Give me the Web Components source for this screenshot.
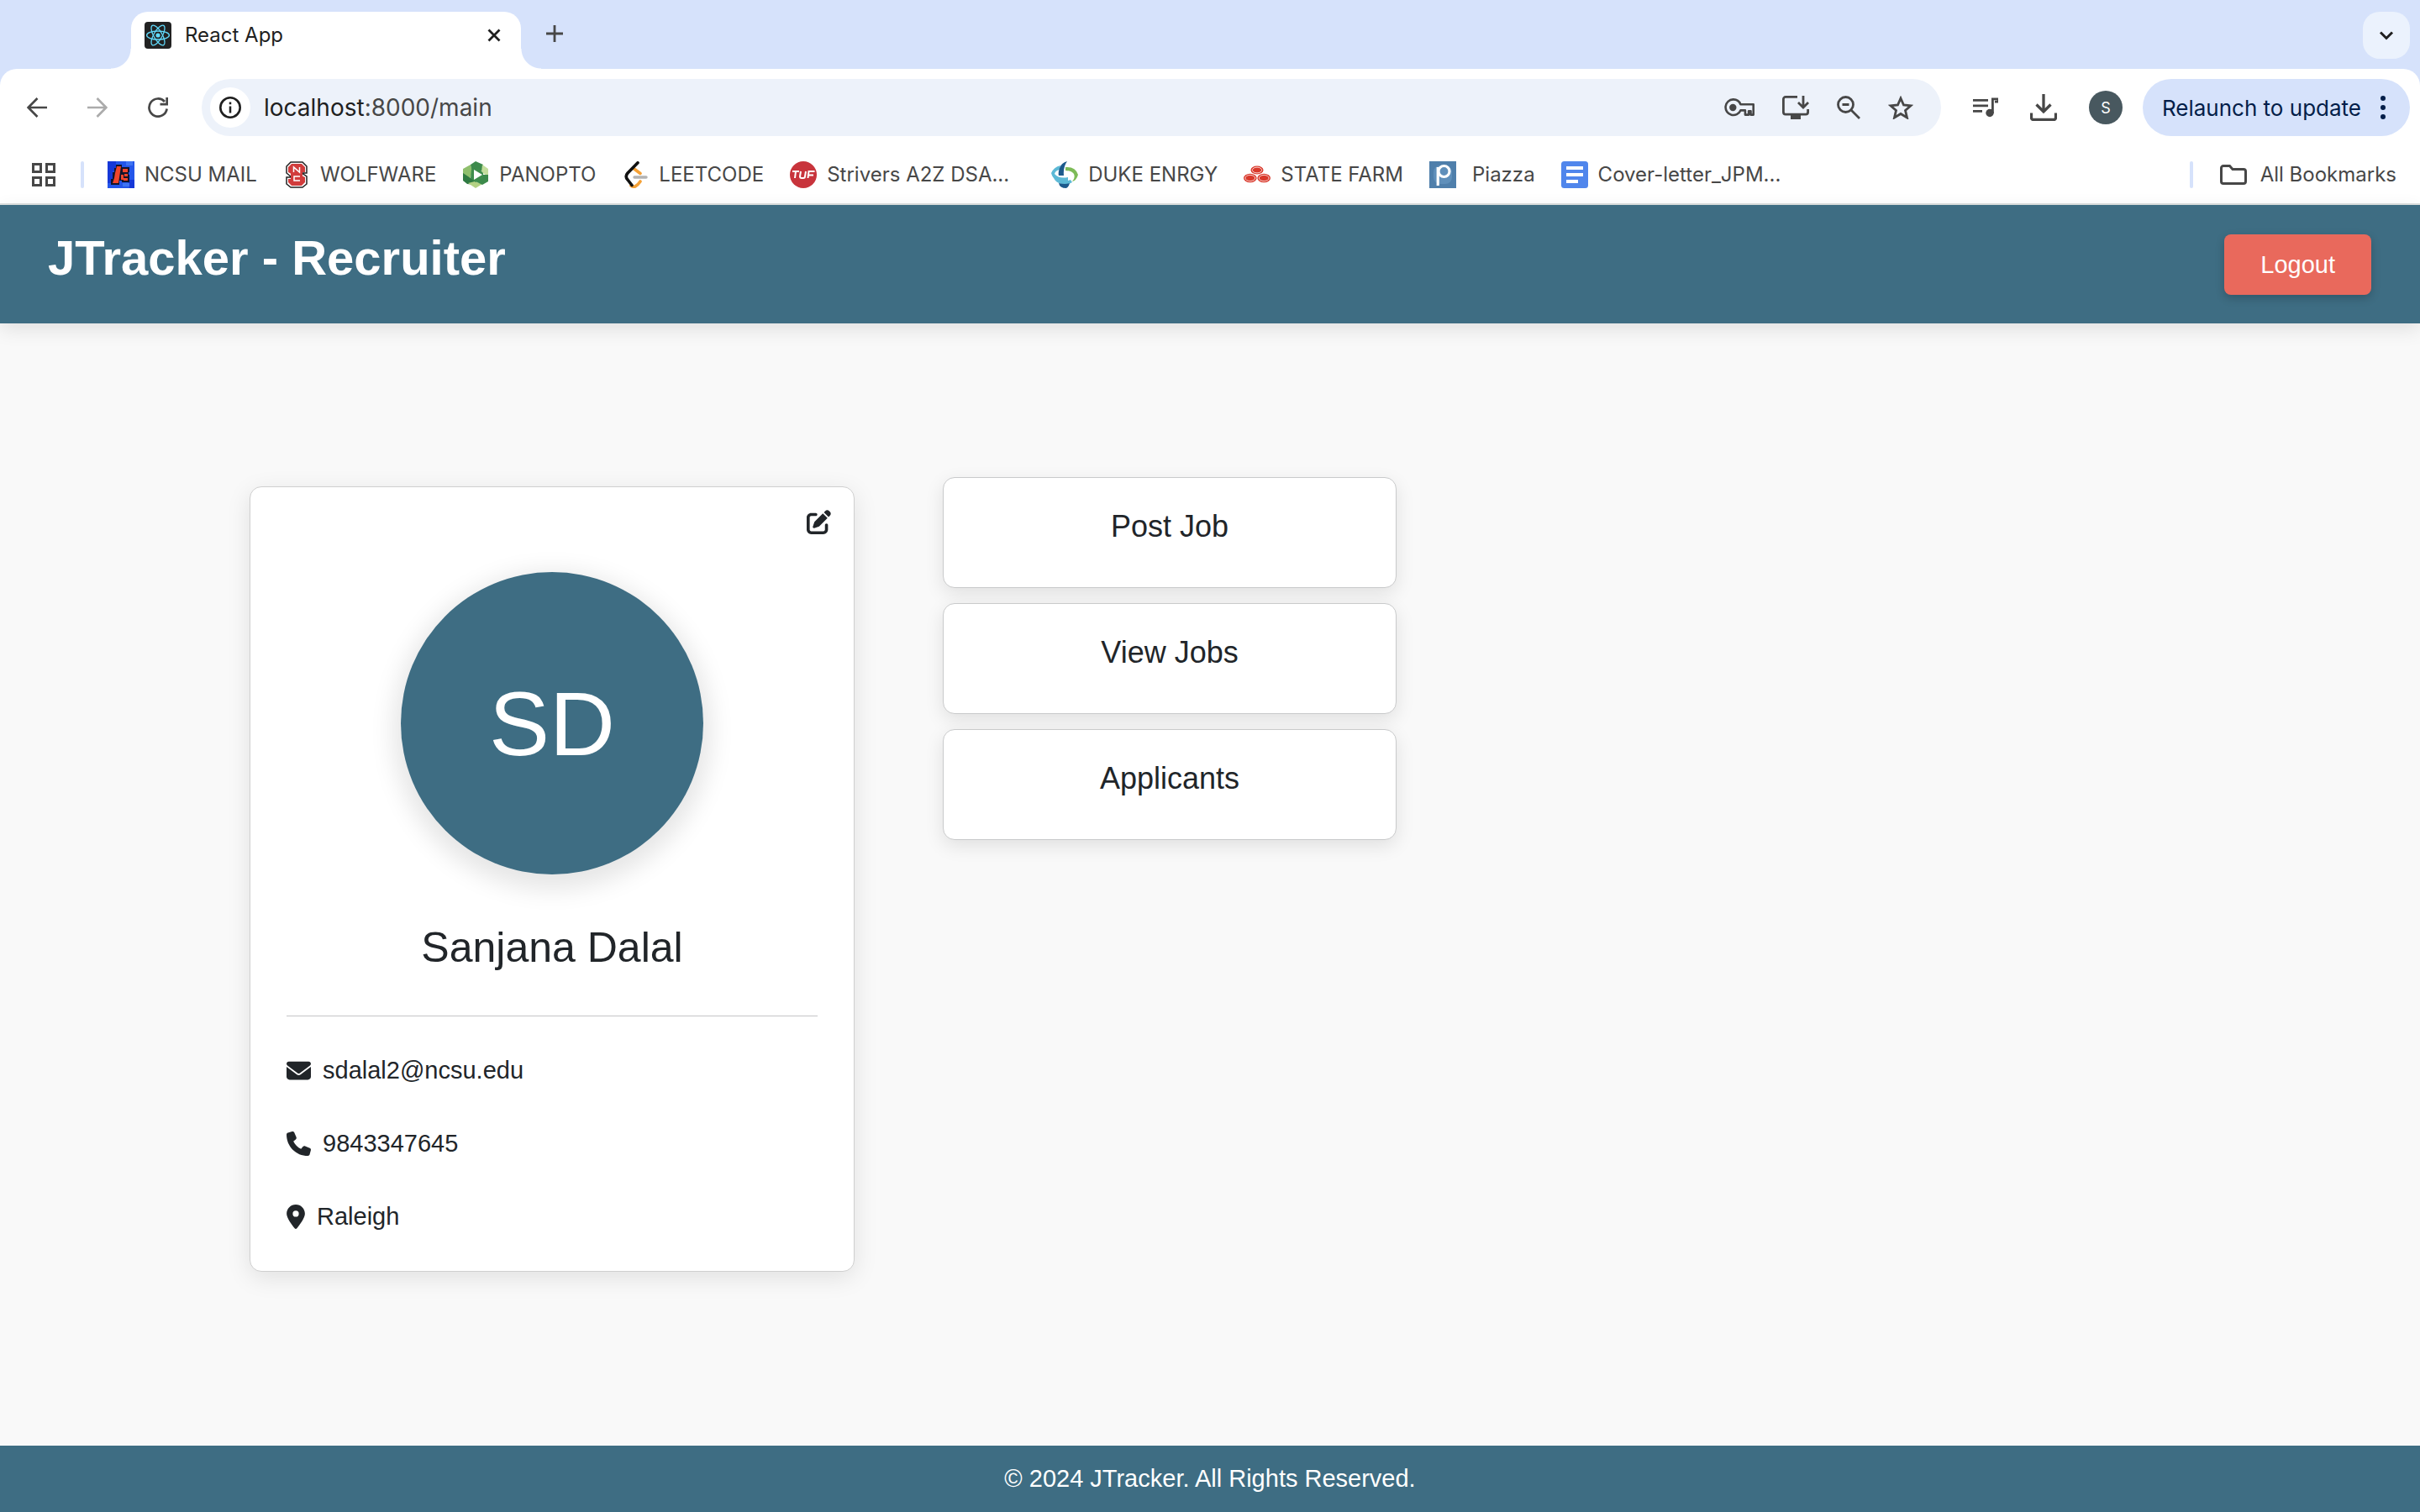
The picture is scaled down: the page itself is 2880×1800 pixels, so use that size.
<!DOCTYPE html>
<html lang="en">
<head>
<meta charset="utf-8">
<title>React App</title>
<style>
html, body { margin: 0; height: 100%; }
body { font-family: "Liberation Sans", Arial, sans-serif; background: #f9f9f9; color: #212529; }
</style>
</head>
<body>
<app-window></app-window>

<script>
const define = (name, html) => {
  const tpl = document.createElement('template');
  tpl.innerHTML = html;
  customElements.define(name, class extends HTMLElement {
    constructor() {
      super();
      this.attachShadow({ mode: 'open' }).append(tpl.content.cloneNode(true));
    }
  });
};

/* ---------- icons ---------- */
const ICONS = {
  react: ['0 0 32 32', `<rect width="32" height="32" rx="4" fill="#222"/><g fill="none" stroke="#61dafb" stroke-width="1.3"><ellipse cx="16" cy="16" rx="13.4" ry="5"/><ellipse cx="16" cy="16" rx="13.4" ry="5" transform="rotate(60 16 16)"/><ellipse cx="16" cy="16" rx="13.4" ry="5" transform="rotate(120 16 16)"/></g><circle cx="16" cy="16" r="2.6" fill="#61dafb"/>`],
  close: ['0 0 16 16', `<path d="M1.5 1.5l13 13M14.500 1.5l-13 13" stroke="currentColor" stroke-width="2.8" fill="none"/>`],
  plus: ['0 0 20 20', `<path d="M10 0v20M0 10h20" stroke="currentColor" stroke-width="2.8" fill="none"/>`],
  chevron: ['0 0 20 20', `<path d="M3 6.500l7 7 7-7" stroke="currentColor" stroke-width="3" fill="none"/>`],
  back: ['0 0 24 24', `<path d="M24 12H2M12.500 1L1.600 12l10.900 11" stroke="currentColor" stroke-width="2.700" fill="none"/>`],
  forward: ['0 0 24 24', `<path d="M0 12h22M11.500 1l10.900 11-10.900 11" stroke="currentColor" stroke-width="2.700" fill="none"/>`],
  reload: ['0 0 24 24', `<path d="M22.600 13.500A10.600 10.600 0 1 1 20 5" stroke="currentColor" stroke-width="2.700" fill="none"/><path d="M24 0v9.500h-9.500V6.800h6.800V0z" fill="currentColor"/>`],
  info: ['0 0 26 26', `<circle cx="13" cy="13" r="11.700" stroke="currentColor" stroke-width="2.600" fill="none"/><path d="M13 11.500v8M13 6.500v2.700" stroke="currentColor" stroke-width="2.500"/>`],
  key: ['0 0 36 22', `<path d="M10.500 1.400a9.300 9.300 0 1 0 8.900 13h5.500v5.200h4.200v-4.400h2.400v4.400h3.200V7.200H19.400a9.300 9.300 0 0 0-8.900-5.800z" fill="none" stroke="currentColor" stroke-width="2.600" stroke-linejoin="round"/><circle cx="10.300" cy="11" r="4.200" fill="currentColor"/>`],
  install: ['0 0 32 28', `<path d="M18 1.400H4A2.600 2.600 0 0 0 1.400 4v15.500A2.600 2.600 0 0 0 4 22.100h24a2.600 2.600 0 0 0 2.600-2.600V16" fill="none" stroke="currentColor" stroke-width="2.800"/><path d="M10 22h12v6H10z" fill="currentColor"/><path d="M25 0v13M19 8l6 6 6-6" fill="none" stroke="currentColor" stroke-width="2.800"/>`],
  zoomout: ['0 0 28 28', `<circle cx="10.500" cy="10.500" r="9" fill="none" stroke="currentColor" stroke-width="2.800"/><path d="M17 17l10 10M6.500 10.500h8" stroke="currentColor" stroke-width="2.800"/>`],
  star: ['0 0 30 28', `<path d="M15 3l3.500 8 8.500.8-6.500 5.700 2 8.500L15 21.500 7.500 26l2-8.500L3 11.800l8.500-.8z" fill="none" stroke="currentColor" stroke-width="2.800"/>`],
  music: ['0 0 30 24', `<path d="M0 3.300h18M0 9.800h18M0 16.300h11" stroke="currentColor" stroke-width="2.800"/><path d="M23.400 19V1.900H30v3.300h-4" fill="none" stroke="currentColor" stroke-width="2.800"/><circle cx="20" cy="18.500" r="4.700" fill="currentColor"/>`],
  download: ['0 0 32 32', `<path d="M16 0v21M7.500 12.500L16 21l8.500-8.500M1.500 22.500V28a2.500 2.500 0 0 0 2.500 2.500h24a2.500 2.500 0 0 0 2.500-2.500v-5.500" fill="none" stroke="currentColor" stroke-width="3.300"/>`],
  dots: ['0 0 6 28', `<g fill="currentColor"><circle cx="3" cy="3" r="3"/><circle cx="3" cy="14" r="3"/><circle cx="3" cy="25" r="3"/></g>`],
  grid: ['0 0 28 28', `<path d="M1.500 1.500h9v9h-9zM17.500 1.500h9v9h-9zM1.500 17.500h9v9h-9zM17.500 17.500h9v9h-9z" fill="none" stroke="currentColor" stroke-width="3"/>`],
  folder: ['0 0 32 24', `<path d="M1.500 4A2.500 2.500 0 0 1 4 1.500h7.500L15 5.400h13a2.500 2.500 0 0 1 2.500 2.500V20a2.500 2.500 0 0 1-2.500 2.500H4A2.500 2.500 0 0 1 1.500 20z" fill="none" stroke="currentColor" stroke-width="3"/>`],
  ncsu: ['0 0 32 32', `<rect width="32" height="32" fill="#2456ea"/><path d="M0 0h10v12H6v14H0zM24 22h8v10h-6z" fill="#1638d8"/><path d="M22 0h8v5h-8zM18 26h8v4h-8z" fill="#3f74f2"/><path d="M10 4h7v3h9v6h-1v3h1v9h-9v-2h-3v5H4v-7h2v-8h2V8h2z" fill="#14142c"/><path d="M11 6h5l-3 20H6l2-6 1-6zM18 9h6v4h-6zM16 16h3v6h-3zM20 15h4v3h-4zM19 20h5v3h-5z" fill="#f2452c"/>`],
  wolfware: ['0 0 32 32', `<path d="M9 1h14l5 5v8h-6l6 4v9l-5 4H9l-5-4v-8h6L4 14V6z" fill="#fff" stroke="#222" stroke-width="1.500"/><path d="M10 3h12l4 4v6h-5V8H11v4l15 7v6l-4 4H10l-4-4v-4h5v3h10v-3L6 13V7z" fill="#d13c3c"/><path d="M9 7h14v18H9z" fill="#d13c3c"/><path d="M12.500 13V7l7 6V7M20 18h-7v5h7" fill="none" stroke="#fff" stroke-width="1.500"/>`],
  panopto: ['0 0 32 32', `<path d="M16 0l9 4v8l-9-2-5 3-1-9z" fill="#3d8a4c"/><path d="M24 4l7 5v9l-8-5z" fill="#c3dd9c"/><path d="M10 4l2 9-3 8-8-5v-7z" fill="#8fbf6d"/><path d="M1 14l9 6 7 2-2 6-9-1-5-4z" fill="#2f7a42"/><path d="M7 26l8-2 9 3-8 5z" fill="#b3d183"/><path d="M31 16v8l-7 4-8-4 7-8z" fill="#3c8a4b"/><path d="M11 10l8-2 6 6v6l-9 5-6-5z" fill="#3f8d4d"/><path d="M14 10l10 6-10 6z" fill="#fff"/>`],
  leetcode: ['0 0 32 32', `<path d="M14 8.500l8 6M11 29q5 4 11-5" fill="none" stroke="#f5a136" stroke-width="3.600" stroke-linecap="round"/><path d="M19 1.800L7 14q-3.600 4 0 8l5 6.500" fill="none" stroke="#111" stroke-width="3.600" stroke-linecap="round" stroke-linejoin="round"/><path d="M15 19h14" stroke="#b3b3b3" stroke-width="3.400" stroke-linecap="round"/>`],
  tuf: ['0 0 32 32', `<circle cx="16" cy="16" r="16" fill="#c8343c"/><path d="M3 12h8M7 12l-1 8M13 12l-1 6q0 2 2 2h2q2 0 2-2l1-6M21.500 20l1-8h7M22 16.500h6" fill="none" stroke="#fff" stroke-width="2"/>`],
  duke: ['0 0 32 32', `<path d="M3 20q8 7 20 2l2 3q-6 4-13 2-7-2-9-7z" fill="#5cb9d6"/><path d="M0 14Q3 7 11 5l-1 5q-5 1-6 5 5 6 16 4v6Q3 26 0 14z" fill="#5cb9d6"/><path d="M17 7q12-1 15 9-2 7-7 8 4-4 2-9-3-4-10-4z" fill="#7dbb57"/><path d="M19 0q-7 2-9 8-2 6-1 9h6Q14 7 19 0zM9 26q1 6 9 6 3-1 4-6-5 2-13 0z" fill="#1d5a8c"/>`],
  statefarm: ['0 0 32 32', `<g fill="#d9382b"><ellipse cx="16" cy="10.500" rx="7.500" ry="5"/><ellipse cx="7.800" cy="20" rx="7.800" ry="5.200"/><ellipse cx="24.200" cy="20" rx="7.800" ry="5.200"/></g><g fill="none" stroke="#fbe4e1" stroke-width=".9"><ellipse cx="16" cy="10.500" rx="5.600" ry="3.400"/><ellipse cx="7.800" cy="20" rx="5.900" ry="3.600"/><ellipse cx="24.200" cy="20" rx="5.900" ry="3.600"/></g>`],
  piazza: ['0 0 32 32', `<rect width="32" height="32" fill="#4f7fab"/><rect x="5" y="5" width="22" height="22" rx="8" fill="#5f8fba"/><circle cx="17.500" cy="12" r="6.500" fill="none" stroke="#fff" stroke-width="3.200"/><path d="M10.200 7v22" stroke="#fff" stroke-width="3.200"/>`],
  doc: ['0 0 32 32', `<rect width="32" height="32" rx="3.500" fill="#5086ec"/><path d="M6 8h20M6 16h20M6 24h14" stroke="#fff" stroke-width="3.800"/>`],
  edit: ['0 0 512 512', `<path fill="currentColor" d="M471.600 21.700c-21.900-21.900-57.300-21.900-79.200 0L362.300 51.700l97.900 97.900 30.100-30.100c21.900-21.900 21.900-57.300 0-79.200L471.600 21.700zm-299.200 220c-6.100 6.100-10.800 13.600-13.500 21.900l-29.600 88.800c-2.900 8.600-.6 18.100 5.800 24.600s15.900 8.700 24.600 5.800l88.800-29.600c8.200-2.700 15.700-7.400 21.900-13.500L437.700 172.300 339.700 74.300 172.400 241.700zM96 64C43 64 0 107 0 160V416c0 53 43 96 96 96H352c53 0 96-43 96-96V320c0-17.700-14.300-32-32-32s-32 14.300-32 32v96c0 17.700-14.300 32-32 32H96c-17.700 0-32-14.300-32-32V160c0-17.700 14.300-32 32-32h96c17.700 0 32-14.300 32-32s-14.300-32-32-32H96z"/>`],
  mail: ['0 0 512 512', `<path fill="currentColor" d="M48 64C21.500 64 0 85.500 0 112c0 15.100 7.100 29.300 19.200 38.400L236.800 313.600c11.400 8.500 27 8.500 38.400 0L492.800 150.400c12.100-9.100 19.200-23.300 19.200-38.400c0-26.500-21.500-48-48-48H48zM0 176V384c0 35.300 28.700 64 64 64H448c35.300 0 64-28.700 64-64V176L294.400 339.200c-22.800 17.100-54 17.100-76.800 0L0 176z"/>`],
  phone: ['0 0 512 512', `<path fill="currentColor" d="M164.900 24.600c-7.700-18.600-28-28.500-47.400-23.200l-88 24C12.100 30.200 0 46 0 64C0 311.400 200.600 512 448 512c18 0 33.800-12.100 38.600-29.500l24-88c5.300-19.400-4.600-39.700-23.200-47.400l-96-40c-16.300-6.800-35.200-2.100-46.300 11.600L304.700 368C234.300 334.700 177.300 277.700 144 207.300L193.300 167c13.700-11.200 18.400-30 11.600-46.300l-40-96z"/>`],
  pin: ['0 0 384 512', `<path fill="currentColor" d="M215.700 499.200C267 435 384 279.400 384 192C384 86 298 0 192 0S0 86 0 192c0 87.400 117 243 168.300 307.200c12.300 15.300 35.100 15.300 47.400 0zM192 128a64 64 0 1 1 0 128 64 64 0 1 1 0-128z"/>`]
};
customElements.define('ui-icon', class extends HTMLElement {
  connectedCallback() {
    const [box, body] = ICONS[this.getAttribute('name')];
    const [, , bw, bh] = box.split(' ').map(Number);
    const h = Number(this.getAttribute('size')) || bh;
    const w = Math.round(h * bw / bh);
    this.attachShadow({ mode: 'open' }).innerHTML =
      `<style>:host{display:block;flex:none}svg{display:block}</style>
       <svg width="${w}" height="${h}" viewBox="${box}" aria-hidden="true">${body}</svg>`;
  }
});

/* ---------- browser chrome ---------- */
define('tab-strip', `
<style>
:host { display: flex; align-items: flex-start; height: 68px; padding: 14px 12px 0 156px; background: #d6e2fb; color: #1f1f1f; }
button { border: 0; padding: 0; background: none; color: inherit; display: grid; place-items: center; }
.tab { position: relative; display: flex; align-items: center; gap: 16px; box-sizing: border-box; width: 464px; height: 68px;
  padding: 0 24px 12px 16px; background: #fff; border-radius: 20px 20px 0 0; font-size: 24px; line-height: 32px; }
.tab::before, .tab::after { content: ""; position: absolute; bottom: 0; width: 24px; height: 24px; }
.tab::before { right: 100%; background: radial-gradient(circle at 0 0, transparent 23px, #fff 24px); }
.tab::after { left: 100%; background: radial-gradient(circle at 100% 0, transparent 23px, #fff 24px); }
.title { flex: 1; }
.new { width: 56px; height: 52px; margin-left: 12px; color: #474747; }
.search { width: 56px; height: 56px; margin-left: auto; border-radius: 20px; background: #ebf2fd; }
</style>
<div class="tab"><ui-icon name="react"></ui-icon><span class="title">React App</span><button aria-label="Close tab"><ui-icon name="close"></ui-icon></button></div>
<button class="new" aria-label="New tab"><ui-icon name="plus"></ui-icon></button>
<button class="search" aria-label="Search tabs"><ui-icon name="chevron"></ui-icon></button>
`);

define('address-bar', `
<style>
:host { display: flex; align-items: center; flex: 1; gap: 16px; box-sizing: border-box; height: 68px; padding: 0 33px 0 10px;
  border-radius: 34px; background: #edf2fa; color: #474747; }
.info { display: grid; place-items: center; width: 48px; height: 48px; border-radius: 50%; background: #fff; color: #1f1f1f; }
.url { flex: 1; font-size: 28px; line-height: 36px; }
b { font-weight: 400; color: #1f1f1f; }
button { border: 0; padding: 0; background: none; color: inherit; }
.actions { display: flex; align-items: center; gap: 33px; }
</style>
<button class="info" aria-label="View site information"><ui-icon name="info"></ui-icon></button>
<span class="url"><b>localhost</b>:8000/main</span>
<div class="actions">
<button aria-label="Passwords"><ui-icon name="key"></ui-icon></button>
<button aria-label="Install app"><ui-icon name="install"></ui-icon></button>
<button aria-label="Zoom"><ui-icon name="zoomout"></ui-icon></button>
<button aria-label="Bookmark this tab"><ui-icon name="star"></ui-icon></button>
</div>
`);

define('tool-bar', `
<style>
:host { display: flex; align-items: center; padding: 12px 12px 12px 32px; color: #474747; }
button { border: 0; padding: 0; background: none; color: inherit; font: inherit; }
.nav { display: flex; gap: 48px; margin-right: 40px; }
.off { color: #ababab; }
.tools { display: flex; align-items: center; gap: 38px; margin: 0 24px 0 38px; }
.avatar { display: grid; place-items: center; width: 40px; height: 40px; border-radius: 50%; background: #48585f; color: #fff; font-size: 18px; }
.update { display: flex; align-items: center; gap: 23px; height: 68px; padding: 0 29px 0 23px; border-radius: 34px; background: #d6e2fb; color: #041e49; font-size: 26px; }
</style>
<div class="nav">
<button aria-label="Back"><ui-icon name="back"></ui-icon></button>
<button class="off" aria-label="Forward"><ui-icon name="forward"></ui-icon></button>
<button aria-label="Reload"><ui-icon name="reload"></ui-icon></button>
</div>
<address-bar></address-bar>
<div class="tools">
<button aria-label="Media controls"><ui-icon name="music"></ui-icon></button>
<button aria-label="Downloads"><ui-icon name="download"></ui-icon></button>
<button class="avatar">S</button>
</div>
<button class="update">Relaunch to update<ui-icon name="dots"></ui-icon></button>
`);

customElements.define('book-mark', class extends HTMLElement {
  connectedCallback() {
    this.attachShadow({ mode: 'open' }).innerHTML = `
<style>
:host { display: block; }
a { display: flex; align-items: center; gap: 12px; color: #474747; text-decoration: none; font-size: 24px; line-height: 32px; white-space: nowrap; }
:host([long]) span { min-width: 236px; }
:host([spaced]) span { padding-left: 7px; }
:host([folder]) a { gap: 16px; }
</style>
<a href="#"><ui-icon name="${this.getAttribute('icon')}"></ui-icon><span><slot></slot></span></a>`;
  }
});

define('bookmarks-bar', `
<style>
:host { display: flex; align-items: center; height: 68px; padding: 0 28px 0 38px; border-bottom: 2px solid #dee1e0; color: #474747; }
button { border: 0; padding: 0; background: none; color: inherit; }
hr { flex: none; width: 4px; height: 32px; margin: 0 28px 0 30px; border: 0; border-radius: 2px; background: #d6e2fb; }
hr.end { margin-right: 32px; }
nav { display: flex; gap: 31px; flex: 1; }
</style>
<button aria-label="Apps"><ui-icon name="grid"></ui-icon></button>
<hr>
<nav>
<book-mark icon="ncsu">NCSU MAIL</book-mark>
<book-mark icon="wolfware">WOLFWARE</book-mark>
<book-mark icon="panopto">PANOPTO</book-mark>
<book-mark icon="leetcode">LEETCODE</book-mark>
<book-mark icon="tuf" long>Strivers A2Z DSA...</book-mark>
<book-mark icon="duke">DUKE ENRGY</book-mark>
<book-mark icon="statefarm">STATE FARM</book-mark>
<book-mark icon="piazza" spaced>Piazza</book-mark>
<book-mark icon="doc">Cover-letter_JPM...</book-mark>
</nav>
<hr class="end">
<book-mark icon="folder" folder>All Bookmarks</book-mark>
`);

define('browser-chrome', `
<style>
:host { display: block; font-family: Inter, Roboto, sans-serif; background: #d6e2fb; }
.bars { background: #fff; border-radius: 20px 20px 0 0; }
</style>
<tab-strip></tab-strip>
<div class="bars"><tool-bar></tool-bar><bookmarks-bar></bookmarks-bar></div>
`);

/* ---------- page ---------- */
define('site-header', `
<style>
:host { display: flex; justify-content: space-between; align-items: flex-start; position: relative; padding: 29px 58px 34px 57px; background: #3e6d83; color: #fff;
  box-shadow: 0 7px 22px rgba(0,0,0,.1); }
h1 { margin: 0; font-size: 58px; line-height: 68px; font-weight: 700; }
button { margin-top: 6px; padding: 15px 43px; border: 0; border-radius: 8px; background: #e9695c; color: #fff;
  font: 29px/42px "Liberation Sans", Arial, sans-serif; box-shadow: 0 4px 11px rgba(0,0,0,.2); }
</style>
<h1><slot></slot></h1><button>Logout</button>
`);

customElements.define('contact-row', class extends HTMLElement {
  connectedCallback() {
    this.attachShadow({ mode: 'open' }).innerHTML = `
<style>:host { display: flex; align-items: center; gap: 14px; font-size: 29px; line-height: 43px; }</style>
<ui-icon name="${this.getAttribute('icon')}" size="29"></ui-icon><span><slot></slot></span>`;
  }
});

define('profile-card', `
<style>
:host { display: block; position: relative; box-sizing: border-box; padding: 101px 43px 43px; border: 1px solid #cfcfcf; border-radius: 14px; background: #fff;
  box-shadow: 0 7px 29px rgba(0,0,0,.1); }
.edit { position: absolute; top: 27px; right: 27px; padding: 0; border: 0; background: none; color: #212529; }
.avatar { display: grid; place-items: center; width: 360px; height: 360px; margin: 0 auto; border-radius: 50%; background: #3e6d83; color: #fff;
  font-size: 108px; box-shadow: 0 9px 29px 9px rgba(0,0,0,.1); }
h2 { margin: 56px 0 0; font-size: 50px; line-height: 62px; font-weight: 400; text-align: center; }
hr { margin: 50px 0 43px; border: 0; border-top: 1px solid #c4c5c6; }
.rows { display: flex; flex-direction: column; gap: 44px; }
</style>
<button class="edit" aria-label="Edit profile"><ui-icon name="edit" size="29"></ui-icon></button>
<div class="avatar">SD</div>
<h2>Sanjana Dalal</h2>
<hr>
<div class="rows">
<contact-row icon="mail">sdalal2@ncsu.edu</contact-row>
<contact-row icon="phone">9843347645</contact-row>
<contact-row icon="pin">Raleigh</contact-row>
</div>
`);

define('action-card', `
<style>
:host { display: block; }
button { display: block; width: 100%; padding: 36px 20px 51px; border: 1px solid #c9cacb; border-radius: 14px; background: #fff; color: #212529;
  font: 36px/43px "Liberation Sans", Arial, sans-serif; box-shadow: 0 7px 22px rgba(0,0,0,.1); }
</style>
<button><slot></slot></button>
`);

define('site-footer', `
<style>
:host { display: block; padding: 18px; background: #3e6d83; color: #fff; text-align: center; font-size: 29px; line-height: 43px; }
</style>
<slot></slot>
`);

define('app-window', `
<style>
:host { display: flex; flex-direction: column; min-height: 100vh; }
main { flex: 1; display: flex; align-items: flex-start; gap: 105px; padding: 183px 297px; }
profile-card { width: 720px; margin-top: 11px; }
.actions { display: flex; flex-direction: column; gap: 18px; width: 540px; }
</style>
<browser-chrome></browser-chrome>
<site-header>JTracker - Recruiter</site-header>
<main>
<profile-card></profile-card>
<div class="actions">
<action-card>Post Job</action-card>
<action-card>View Jobs</action-card>
<action-card>Applicants</action-card>
</div>
</main>
<site-footer>© 2024 JTracker. All Rights Reserved.</site-footer>
`);
</script>
</body>
</html>
